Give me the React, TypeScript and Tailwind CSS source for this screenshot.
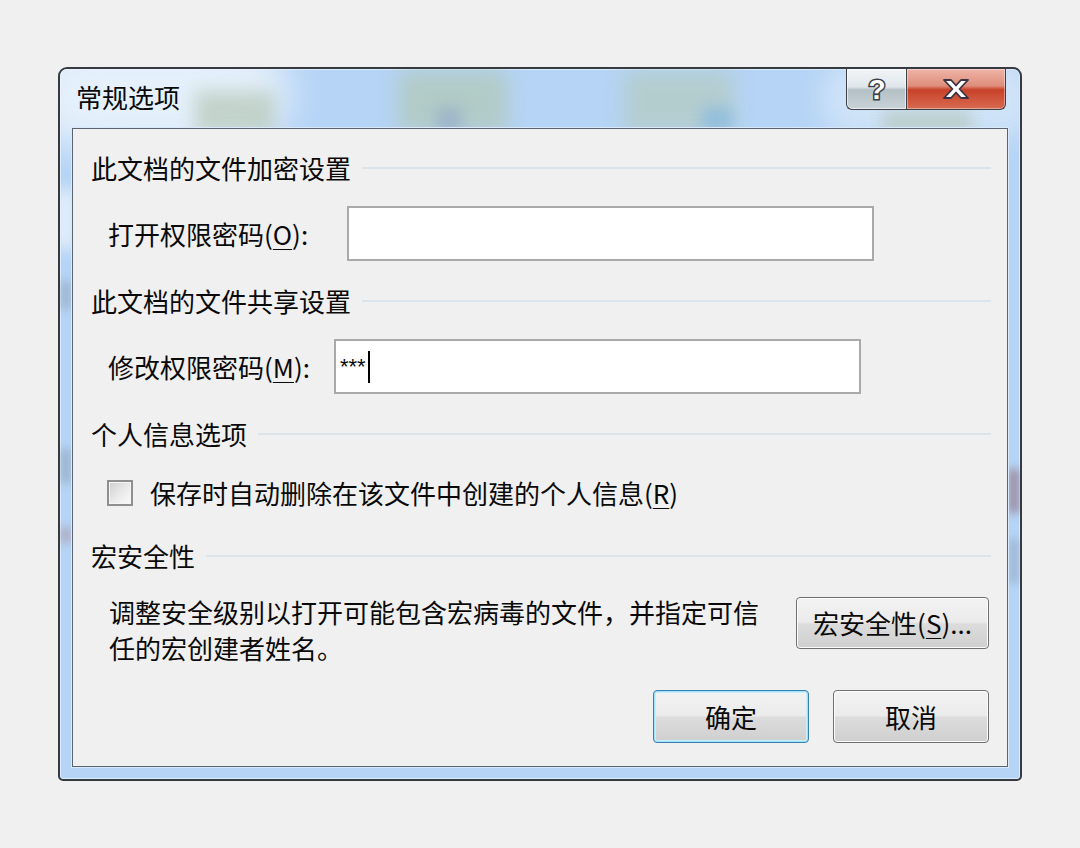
import React from 'react';

const btnFace =
  'bg-[linear-gradient(to_bottom,#f3f3f3_0%,#ebebeb_48%,#dcdcdc_52%,#cfcfcf_100%)]';

function SectionHeader({ title }: { title: string }) {
  return (
    <div className="flex h-[36px] items-center">
      <span className="pl-[18px] leading-[36px]">{title}</span>
      <div className="ml-[11px] h-[2px] flex-1 bg-[#dbe4eb]" />
    </div>
  );
}

function Key({ k }: { k: string }) {
  return (
    <>
      (<span className="underline decoration-1 underline-offset-[4px]">{k}</span>)
    </>
  );
}

function PushButton({
  children,
  width,
  isDefault = false,
}: {
  children: React.ReactNode;
  width: string;
  isDefault?: boolean;
}) {
  return (
    <button
      className={`${width} h-[53px] rounded-[4px] border ${btnFace} leading-[36px] ${
        isDefault
          ? 'border-[#3c7fb1] shadow-[inset_0_0_0_1px_#9fe1fa,inset_0_0_0_2px_#c9eefc]'
          : 'border-[#707070] shadow-[inset_0_0_0_1px_#fcfcfc]'
      }`}
    >
      {children}
    </button>
  );
}

function HelpButton() {
  return (
    <div className="flex h-[41px] w-[60px] items-center justify-center rounded-bl-[6px] border border-t-0 border-r-0 border-[#3d3f44] bg-[linear-gradient(to_bottom,#f2f5f7_0%,#dfe6ea_45%,#b3c0c6_52%,#c9d3d7_100%)] shadow-[inset_0_0_0_1px_#ffffff99]">
      <svg width="24" height="30" viewBox="0 0 24 30">
        <text
          x="12"
          y="25"
          textAnchor="middle"
          fontFamily="'Liberation Sans', Arial, sans-serif"
          fontWeight="bold"
          fontSize="28"
          fill="#ffffff"
          stroke="#3b3f4a"
          strokeWidth="3"
          paintOrder="stroke"
        >
          ?
        </text>
      </svg>
    </div>
  );
}

function CloseButton() {
  return (
    <div className="flex h-[41px] w-[100px] items-center justify-center rounded-br-[6px] border border-t-0 border-[#3d3f44] bg-[linear-gradient(to_bottom,#eeb4a6_0%,#df8e7b_42%,#c8412a_52%,#d86b50_100%)] shadow-[inset_0_0_0_1px_#ffffff66]">
      <svg width="30" height="22" viewBox="0 0 30 22">
        <path
          d="M3 2 H10 L15 7.5 L20 2 H27 L18.5 11 L27 20 H20 L15 14.5 L10 20 H3 L11.5 11 Z"
          fill="#ffffff"
          stroke="#3a3444"
          strokeWidth="1.8"
          strokeLinejoin="round"
        />
      </svg>
    </div>
  );
}

export default function App() {
  return (
    <div className="h-[848px] w-[1080px] bg-[#f0f0f0] pl-[58px] pt-[67px] font-['Noto_Sans_CJK_SC','Noto_Sans',sans-serif] text-[26px] text-[#0a0a0a]">
      <div className="relative w-[964px] overflow-hidden rounded-t-[9px] rounded-b-[5px] border-2 border-[#363b42] bg-[#b5d4f6] shadow-[inset_0_0_0_1px_#dcebfa]">
        {/* frame glow and blur decorations */}
        <div className="absolute -left-[30px] -top-[30px] h-[110px] w-[260px] rounded-full bg-[#eaf3fb] opacity-90 blur-[18px]" />
        <div className="absolute left-[760px] -top-[10px] h-[80px] w-[220px] rounded-full bg-[#d6e7f8] opacity-80 blur-[14px]" />
        <div className="absolute left-[-10px] top-[120px] h-[60px] w-[30px] bg-[#e4eff9] opacity-90 blur-[8px]" />
        <div className="absolute left-[135px] top-[22px] h-[44px] w-[80px] bg-[#b4c7b6] opacity-70 blur-[9px]" />
        <div className="absolute left-[338px] top-[2px] h-[62px] w-[110px] bg-[#b1c8b8] opacity-75 blur-[10px]" />
        <div className="absolute left-[376px] top-[38px] h-[26px] w-[26px] bg-[#8fa9c8] opacity-60 blur-[7px]" />
        <div className="absolute left-[564px] top-[2px] h-[62px] w-[110px] bg-[#b3cbc2] opacity-75 blur-[10px]" />
        <div className="absolute left-[642px] top-[38px] h-[26px] w-[30px] bg-[#86b8e0] opacity-70 blur-[7px]" />
        <div className="absolute left-[822px] top-[42px] h-[22px] w-[90px] bg-[#b2c6b9] opacity-70 blur-[8px]" />
        <div className="absolute left-[1px] top-[212px] h-[28px] w-[10px] bg-[#8a9cb0] opacity-60 blur-[5px]" />
        <div className="absolute left-[1px] top-[380px] h-[34px] w-[10px] bg-[#8798ab] opacity-60 blur-[5px]" />
        <div className="absolute left-[1px] top-[458px] h-[16px] w-[10px] bg-[#a78a93] opacity-60 blur-[5px]" />
        <div className="absolute right-[1px] top-[400px] h-[44px] w-[10px] bg-[#8f6570] opacity-70 blur-[5px]" />
        <div className="absolute right-[1px] top-[470px] h-[44px] w-[10px] bg-[#8ea0b6] opacity-60 blur-[5px]" />

        {/* title bar */}
        <div className="relative flex h-[59px] items-start justify-between">
          <span className="pl-[16px] pt-[10px] leading-[36px]">常规选项</span>
          <div className="mr-[14px] flex">
            <HelpButton />
            <CloseButton />
          </div>
        </div>

        {/* client area */}
        <div className="relative mx-[12px] h-[639px] border-[1.5px] border-[#596470] bg-[#f0f0f0] pr-[16px] pt-[21px] shadow-[0_0_0_1px_#d9e9f9]">
          <SectionHeader title="此文档的文件加密设置" />

          <div className="mt-[20px] flex h-[55px] items-center">
            <span className="w-[274px] pl-[35px] leading-[36px]">
              打开权限密码<Key k="O" />:
            </span>
            <div className="h-[55px] w-[527px] border-2 border-[#a9a9a9] bg-white" />
          </div>

          <div className="mt-[22px]">
            <SectionHeader title="此文档的文件共享设置" />
          </div>

          <div className="mt-[20px] flex h-[55px] items-center">
            <span className="w-[261px] pl-[35px] leading-[36px]">
              修改权限密码<Key k="M" />:
            </span>
            <div className="flex h-[55px] w-[527px] items-center border-2 border-[#a9a9a9] bg-white pl-[4px]">
              <span className="font-['Liberation_Sans',sans-serif] text-[22px] leading-none">***</span>
              <span className="ml-[2px] h-[32px] w-[2px] bg-black" />
            </div>
          </div>

          <div className="mt-[22px]">
            <SectionHeader title="个人信息选项" />
          </div>

          <div className="mt-[23px] flex h-[36px] items-center pl-[34px]">
            <div className="h-[26px] w-[26px] border-2 border-[#8e8f8f] bg-[linear-gradient(135deg,#cfcfcf_0%,#e9e9e9_50%,#fbfbfb_100%)] shadow-[inset_0_0_0_1px_#f4f4f4]" />
            <span className="ml-[17px] leading-[36px]">
              保存时自动删除在该文件中创建的个人信息<Key k="R" />
            </span>
          </div>

          <div className="mt-[27px]">
            <SectionHeader title="宏安全性" />
          </div>

          <div className="mt-[20px] flex items-start justify-between pr-[2px]">
            <p className="pl-[36px] leading-[36px]">
              调整安全级别以打开可能包含宏病毒的文件，并指定可信
              <br />
              任的宏创建者姓名。
            </p>
            <div className="mt-[3px]">
              <button
                className={`h-[52px] w-[193px] rounded-[4px] border border-[#707070] ${btnFace} leading-[36px] shadow-[inset_0_0_0_1px_#fcfcfc]`}
              >
                宏安全性<Key k="S" />...
              </button>
            </div>
          </div>

          <div className="mt-[24px] flex justify-end gap-[24px] pr-[2px]">
            <PushButton width="w-[156px]" isDefault>
              确定
            </PushButton>
            <PushButton width="w-[156px]">取消</PushButton>
          </div>
        </div>

        <div className="h-[12px]" />
      </div>
    </div>
  );
}
